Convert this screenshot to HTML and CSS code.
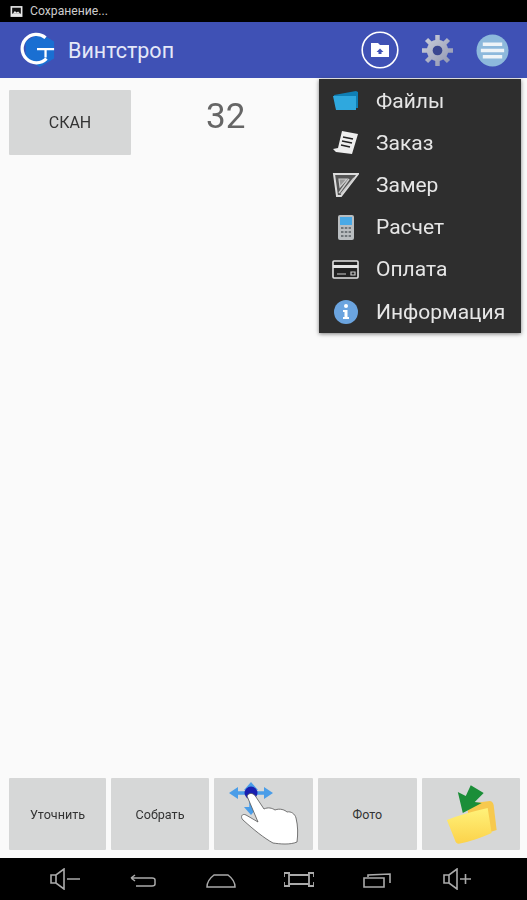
FILE: index.html
```html
<!DOCTYPE html>
<html lang="ru">
<head>
    <meta charset="UTF-8">
    <meta name="viewport" content="width=device-width, initial-scale=1.0">
    <title>Винтстроп</title>
    <link rel="stylesheet" href="styles.css">
</head>
<body>

    <div class="status-bar">
        <svg class="status-icon" viewBox="0 0 12 12">
            <rect x="0.500" y="1" width="11" height="10" fill="#e8e8e8"/>
            <rect x="2" y="2.500" width="8" height="5.500" fill="#111"/>
            <path d="M2.500 8l2-2.500 1.500 1.500 1.500-1L9.500 8z" fill="#e8e8e8"/>
        </svg>
        <span>Сохранение...</span>
    </div>

    <div class="app-bar">
        <svg class="logo" viewBox="0 0 40 40">
            <path d="M23 2l15 9v18l-15 9-15-9V11z" fill="#1a6fd2"/>
            <path d="M29 7A15 15 0 1 0 30 29" fill="none" stroke="#fff" stroke-width="3.400"/>
            <path d="M20 19h18M29 19v9" fill="none" stroke="#fff" stroke-width="2.400"/>
        </svg>
        <span class="app-title">Винтстроп</span>
        <div class="app-actions">
            <svg class="action action-folder" viewBox="0 0 38 38">
                <circle cx="19" cy="19" r="17.800" fill="none" stroke="#fff" stroke-width="1.600"/>
                <path d="M10 12h7l2 2h9v12H10z" fill="#fff"/>
                <path d="M19 17.500l3.500 3.500h-2v2h-3v-2h-2z" fill="#3f51b5"/>
            </svg>
            <svg class="action" viewBox="0 0 34 34">
                <defs>
                    <linearGradient id="gear" gradientUnits="userSpaceOnUse" x1="0" y1="0" x2="34" y2="34">
                        <stop offset="0" stop-color="#d2d5de"/>
                        <stop offset="1" stop-color="#8a90ae"/>
                    </linearGradient>
                </defs>
                <path d="M17 1v32M1 17h32M5.700 5.700l22.600 22.600M5.700 28.300L28.300 5.700" stroke="url(#gear)" stroke-width="4.600"/>
                <circle cx="17" cy="17" r="11" fill="url(#gear)"/>
                <circle cx="17" cy="17" r="5" fill="#3a4690"/>
            </svg>
            <svg class="action" viewBox="0 0 34 34">
                <circle cx="17" cy="17" r="16.500" fill="#8db9dc"/>
                <path d="M7 10.500h20M5 17h24M7 23.500h20" stroke="#eef4f8" stroke-width="3.600"/>
            </svg>
        </div>
    </div>

    <div class="content">
        <div class="top-row">
            <button class="btn btn-scan">СКАН</button>
            <span class="count">32</span>
        </div>

        <div class="bottom-row">
            <button class="btn btn-small">Уточнить</button>
            <button class="btn btn-small">Собрать</button>
            <button class="btn">
                <svg class="btn-icon" viewBox="0 0 99 72">
                    <path d="M19 15h36M37 8v24" stroke="#4a9de8" stroke-width="3.500"/>
                    <path d="M15 15l9-6v12zM59 15l-9-6v12zM37 4l-7 8h14zM37 37l-7-8h14z" fill="#4a9de8"/>
                    <circle cx="37" cy="15" r="6.500" fill="#1a1fb0"/>
                    <path d="M33 18C35 14 40 15 42 19L50 31C54 29 58 30 61 32C66 30 71 32 73 34C77 33 81 36 82 40C84 48 84 56 83 64C76 67 66 66 59 65C50 60 40 52 29 42C26 39 28 35 32 37L44 44z" fill="#fff" stroke="#555" stroke-width="0.800"/>
                </svg>
            </button>
            <button class="btn btn-small btn-photo">Фото</button>
            <button class="btn">
                <svg class="btn-icon" viewBox="0 0 99 72">
                    <defs>
                        <linearGradient id="folder" x1="0" y1="0" x2="0" y2="1">
                            <stop offset="0" stop-color="#fff27a"/>
                            <stop offset="1" stop-color="#fcd24a"/>
                        </linearGradient>
                    </defs>
                    <path d="M45 26L68 23Q71 23 72 27L75 52L50 60z" fill="#f7c94e"/>
                    <path d="M25 42Q40 36 66 30L70 55Q55 62 37 66Q34 66 33 62z" fill="url(#folder)"/>
                    <path d="M36 14L44 18L49 7L62 15L53 24L60 25L41 35z" fill="#1b8e38"/>
                </svg>
            </button>
        </div>
    </div>

    <div class="nav-bar">
        <svg class="nav-icon" viewBox="0 0 30 22">
            <path d="M1 7h5l8-6v20l-8-6H1zM6 7v8M17 11h13" fill="none" stroke="#aaa" stroke-width="1.600"/>
        </svg>
        <svg class="nav-icon" viewBox="0 0 30 22">
            <path d="M3 10h21c2 0 3 1 3 2v4c0 1-1 2-3 2H8M3 10l4-3M3 10l4 3" fill="none" stroke="#aaa" stroke-width="1.500"/>
        </svg>
        <svg class="nav-icon" viewBox="0 0 30 22">
            <path d="M1 19c0-6 3-9 7-12h14c4 3 7 6 7 12z" fill="none" stroke="#aaa" stroke-width="1.500"/>
        </svg>
        <svg class="nav-icon" viewBox="0 0 30 22">
            <path d="M5 7h20v9H5zM0 5h6M24 5h6M0 18h6M24 18h6M0 5v4M30 5v4M0 14v4M30 14v4" fill="none" stroke="#aaa" stroke-width="1.800"/>
        </svg>
        <svg class="nav-icon" viewBox="0 0 30 22">
            <path d="M2 10h20v9H2zM6 9V7l22-1v9" fill="none" stroke="#aaa" stroke-width="1.600"/>
        </svg>
        <svg class="nav-icon" viewBox="0 0 30 22">
            <path d="M1 7h5l8-6v20l-8-6H1zM6 7v8M17 11h11M22.500 6v10" fill="none" stroke="#aaa" stroke-width="1.600"/>
        </svg>
    </div>

    <div class="menu">
        <div class="menu-item">
            <svg class="menu-icon" viewBox="0 0 27 27">
                <path d="M2 8l22-4 2 1v16H4z" fill="#0f7fb5"/>
                <path d="M1 9h23v14H4z" fill="#2fa8de"/>
            </svg>
            <span>Файлы</span>
        </div>
        <div class="menu-item">
            <svg class="menu-icon" viewBox="0 0 27 27">
                <path d="M10 2l16 3-6 20-16-2-3-3 5-1z" fill="#eee"/>
                <path d="M11 8l10 2M10 12l10 2M9 16l9 2" stroke="#222" stroke-width="1.600"/>
            </svg>
            <span>Заказ</span>
        </div>
        <div class="menu-item">
            <svg class="menu-icon" viewBox="0 0 27 27">
                <path d="M2 3h24L9 25H5z" fill="#555" stroke="#ddd" stroke-width="2"/>
                <path d="M7 8h8L8 16z" fill="#999" stroke="#ccc" stroke-width="1.200"/>
                <path d="M22 7L9 23M17 8L7 22" stroke="#ccc" stroke-width="1.500"/>
            </svg>
            <span>Замер</span>
        </div>
        <div class="menu-item">
            <svg class="menu-icon" viewBox="0 0 27 27">
                <rect x="6" y="1" width="16" height="25" rx="2" fill="#b9bdc0"/>
                <rect x="8" y="3" width="12" height="8" fill="#49a9e6"/>
                <path d="M9 14h10M9 18h10M9 22h10" stroke="#70767a" stroke-width="2" stroke-dasharray="2.500 1.300"/>
            </svg>
            <span>Расчет</span>
        </div>
        <div class="menu-item">
            <svg class="menu-icon" viewBox="0 0 27 27">
                <rect x="1" y="5" width="25" height="17" rx="1" fill="#222" stroke="#e4e4e4" stroke-width="1.600"/>
                <path d="M1 10.500h25" stroke="#e4e4e4" stroke-width="3"/>
                <path d="M5 18h9M19 16h4v3h-4z" fill="none" stroke="#ccc" stroke-width="1.200"/>
            </svg>
            <span>Оплата</span>
        </div>
        <div class="menu-item">
            <svg class="menu-icon" viewBox="0 0 27 27">
                <circle cx="14" cy="14" r="12" fill="#6ba4df"/>
                <circle cx="14" cy="8" r="2" fill="#fff"/>
                <path d="M11 12h4.500v7H17v2h-6v-2h1.500v-5H11z" fill="#fff"/>
            </svg>
            <span>Информация</span>
        </div>
    </div>

</body>
</html>
```

FILE: styles.css
```css
* {
    box-sizing: border-box;
}
body {
    margin: 0;
    height: 900px;
    display: flex;
    flex-direction: column;
    font-family: Roboto, "Liberation Sans", sans-serif;
    background-color: #fafafa;
    overflow: hidden;
    filter: blur(0.5px);
}
.status-bar {
    height: 22px;
    background: #000;
    color: #ccc;
    font-size: 12.200px;
    display: flex;
    align-items: center;
    gap: 7px;
    padding-left: 10px;
}
.status-icon {
    width: 13px;
    height: 13px;
}
.app-bar {
    height: 56px;
    background: #3f51b5;
    display: flex;
    align-items: center;
    padding-left: 18px;
    padding-right: 18px;
}
.logo {
    width: 38px;
    height: 38px;
}
.app-title {
    color: #e4e8f8;
    font-size: 21.500px;
    margin-left: 12px;
}
.app-actions {
    margin-left: auto;
    display: flex;
    align-items: center;
    gap: 22px;
}
.action {
    width: 33px;
    height: 33px;
}
.action-folder {
    width: 38px;
    height: 38px;
}
.content {
    flex: 1;
    display: flex;
    flex-direction: column;
    justify-content: space-between;
    padding: 12px 7px 8px 9px;
}
.top-row {
    display: flex;
    align-items: center;
    height: 65px;
}
.count {
    font-size: 35px;
    color: #666;
    margin-left: 75px;
    margin-top: -12px;
}
.btn {
    border: none;
    border-radius: 1px;
    padding: 0;
    background: #d6d7d7;
    color: #333;
    font-family: inherit;
    font-size: 16px;
    display: flex;
    align-items: center;
    justify-content: center;
}
.btn-scan {
    width: 122px;
    height: 65px;
}
.bottom-row {
    display: grid;
    grid-template-columns: 97px 98px 99px 98.500px 98.500px;
    gap: 5px;
    height: 72px;
}
.btn-small {
    font-size: 12.600px;
}
.btn-photo {
    font-size: 12.500px;
}
.btn-icon {
    width: 99px;
    height: 72px;
}
.nav-bar {
    height: 42px;
    background: #000;
    display: grid;
    grid-template-columns: repeat(5, 78px) 84px;
    justify-items: center;
    align-items: center;
    padding-left: 26px;
}
.nav-icon {
    width: 30px;
    height: 22px;
}
.menu {
    position: absolute;
    left: 319px;
    top: 79px;
    width: 202px;
    height: 254px;
    background: #2e2e2e;
    box-shadow: 0 1px 4px rgba(0, 0, 0, 0.5);
    padding-top: 0.500px;
}
.menu-item {
    height: 42.200px;
    display: flex;
    align-items: center;
    color: #e6e6e6;
    font-size: 21px;
    padding-left: 13px;
    gap: 17px;
}
.menu-icon {
    width: 27px;
    height: 27px;
    flex-shrink: 0;
}
```
